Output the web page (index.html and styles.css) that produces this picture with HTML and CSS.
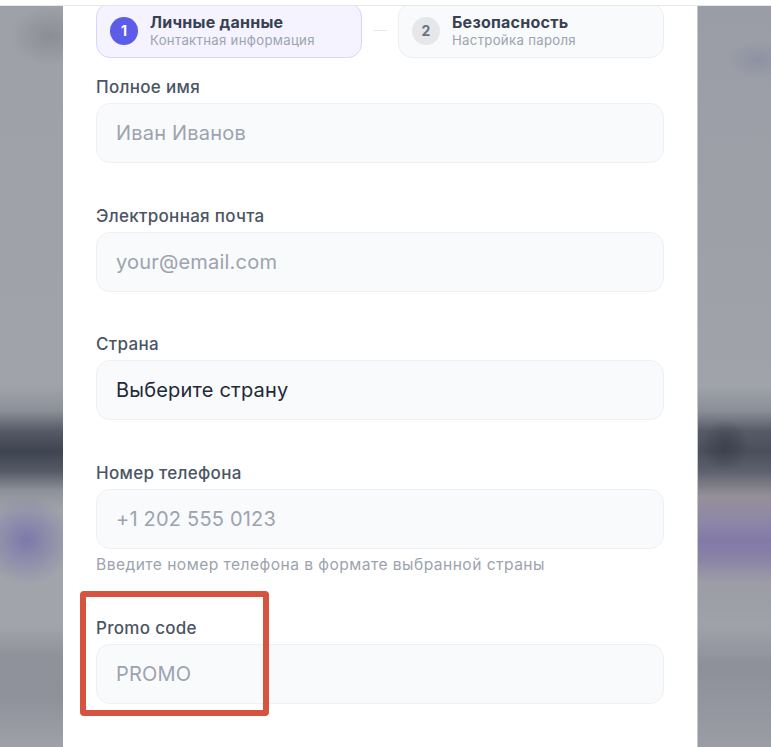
FILE: index.html
```html
<!DOCTYPE html>
<html lang="ru">
<head>
<meta charset="utf-8">
<title>Регистрация</title>
<link rel="stylesheet" href="styles.css">
</head>
<body>
<div class="topbar"></div>
<div class="stage">
  <div class="backdrop backdrop-left"></div>
  <main class="modal">
    <div class="steps">
      <div class="step step-active">
        <span class="step-num">1</span>
        <div class="step-text">
          <div class="step-title">Личные данные</div>
          <div class="step-sub">Контактная информация</div>
        </div>
      </div>
      <div class="step-line"></div>
      <div class="step">
        <span class="step-num">2</span>
        <div class="step-text">
          <div class="step-title">Безопасность</div>
          <div class="step-sub">Настройка пароля</div>
        </div>
      </div>
    </div>

    <div class="field">
      <label class="label">Полное имя</label>
      <input class="input" type="text" placeholder="Иван Иванов">
    </div>
    <div class="field">
      <label class="label">Электронная почта</label>
      <input class="input" type="email" placeholder="your@email.com">
    </div>
    <div class="field">
      <label class="label">Страна</label>
      <div class="input select">Выберите страну</div>
    </div>
    <div class="field">
      <label class="label">Номер телефона</label>
      <input class="input" type="tel" placeholder="+1 202 555 0123">
      <div class="hint">Введите номер телефона в формате выбранной страны</div>
    </div>
    <div class="field promo">
      <label class="label">Promo code</label>
      <input class="input" type="text" placeholder="PROMO">
      <div class="highlight"></div>
    </div>
  </main>
  <div class="backdrop backdrop-right"></div>
</div>
</body>
</html>
```

FILE: styles.css
```css
* { box-sizing: border-box; }

html, body {
  margin: 0;
  height: 100%;
  overflow: hidden;
  font-family: Inter, "Noto Sans", "Liberation Sans", sans-serif;
  background: #fff;
}

.topbar {
  position: relative;
  z-index: 2;
  height: 6px;
  background: #fff;
  border-bottom: 1px solid #e6e7ea;
}

.stage {
  display: grid;
  grid-template-columns: 63px 634px 1fr;
  height: calc(100vh - 6px);
}

.backdrop-left {
  background:
    radial-gradient(ellipse 48px 44px at 26px 534px, rgba(110, 102, 170, 0.7), rgba(110, 102, 170, 0) 100%),
    radial-gradient(ellipse 40px 30px at 50px 30px, rgba(120, 122, 130, 0.5), rgba(120, 122, 130, 0) 100%),
    linear-gradient(to bottom,
      #9ea1a8 0px,
      #a0a3aa 380px,
      #8b8f97 405px,
      #555a66 425px,
      #3f4451 445px,
      #545966 465px,
      #8f929a 485px,
      #a1a4ab 505px,
      #a1a4ab 620px,
      #8f929a 650px,
      #8e919a 690px,
      #9ea1a8 741px);
}

.backdrop-right {
  border-left: 1px solid #c5c7cc;
  background:
    radial-gradient(ellipse 30px 18px at 60px 54px, rgba(130, 132, 160, 0.5), rgba(130, 132, 160, 0) 100%),
    radial-gradient(ellipse 24px 26px at 27px 440px, rgba(50, 54, 66, 0.6), rgba(50, 54, 66, 0) 100%),
    linear-gradient(to bottom,
      #9a9da5 0px,
      #a0a3aa 380px,
      #8a8e96 405px,
      #565b67 425px,
      #4a4f5c 445px,
      #5d616d 465px,
      #959099 490px,
      #8e87a6 515px,
      #8379a8 535px,
      #8b85a5 555px,
      #9b9ca6 575px,
      #9fa2a9 620px,
      #8d9099 660px,
      #9a9da4 741px);
}

.modal {
  background: #fff;
  padding: 0 33px 0 33px;
}

/* Steps */
.steps {
  display: flex;
  align-items: center;
  margin-top: -3px;
  margin-bottom: 18px;
}

.step {
  flex: 1;
  display: flex;
  align-items: center;
  gap: 12px;
  height: 55px;
  padding: 0 13px;
  border-radius: 14px;
  background: #f9fafb;
  border: 1px solid #eceef1;
}

.step-active {
  background: #f4f3ff;
  border-color: #d8d5fb;
}

.step-num {
  flex: none;
  width: 28px;
  height: 28px;
  border-radius: 50%;
  display: flex;
  align-items: center;
  justify-content: center;
  background: #e6e7eb;
  color: #6b7280;
  font-size: 14px;
  font-weight: 700;
}

.step-active .step-num {
  background: #5d5ce8;
  color: #fff;
}

.step-title {
  font-size: 16px;
  line-height: 20px;
  font-weight: 700;
  letter-spacing: 0.25px;
  color: #374151;
}

.step-sub {
  font-size: 13.2px;
  line-height: 17px;
  letter-spacing: 0.3px;
  color: #9ca3af;
}

.step-line {
  width: 13px;
  height: 1px;
  margin: 0 11px 0 12px;
  background: #e5e7eb;
  flex: none;
}

/* Fields */
.field {
  display: flex;
  flex-direction: column;
  margin-bottom: 41.5px;
}

.label {
  font-size: 17px;
  line-height: 22px;
  font-weight: 500;
  letter-spacing: 0.3px;
  color: #4b5563;
  margin-bottom: 5px;
}

.input {
  display: flex;
  align-items: center;
  width: 100%;
  height: 60px;
  padding: 0 19px;
  border-radius: 14px;
  background: #f9fafb;
  border: 1px solid #eef0f3;
  font-family: inherit;
  font-size: 20px;
  letter-spacing: 0.2px;
  color: #1f2937;
  outline: none;
}

.input::placeholder {
  color: #9ca3af;
  opacity: 1;
}

.select {
  color: #1f2937;
}

.hint {
  margin-top: 6.5px;
  font-size: 15.6px;
  line-height: 20px;
  letter-spacing: 0.45px;
  color: #9ca3af;
}

.promo {
  position: relative;
}

.highlight {
  position: absolute;
  left: -16px;
  top: -26px;
  width: 189px;
  height: 125px;
  border: 6px solid #d5533f;
  border-radius: 4px;
  pointer-events: none;
}
```
